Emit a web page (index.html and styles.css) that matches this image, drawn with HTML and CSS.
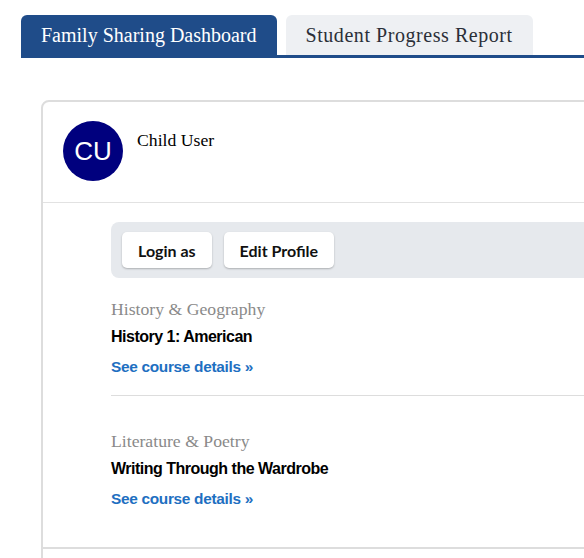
FILE: index.html
```html
<!DOCTYPE html>
<html lang="en">
<head>
<meta charset="utf-8">
<title>Family Sharing Dashboard</title>
<link rel="stylesheet" href="styles.css">
</head>
<body>
<div class="page">
  <nav class="tabs">
    <a class="tab tab-active" href="#">Family Sharing Dashboard</a>
    <a class="tab tab-wide" href="#">Student Progress Report</a>
  </nav>

  <section class="card">
    <header class="card-head">
      <div class="avatar">CU</div>
      <div class="name">Child User</div>
    </header>
    <div class="card-body">
      <div class="actions">
        <button class="btn" type="button">Login as</button>
        <button class="btn" type="button">Edit Profile</button>
      </div>
      <div class="courses">
        <div class="course">
          <div class="course-cat">History &amp; Geography</div>
          <div class="course-title">History 1: American</div>
          <a class="course-link" href="#">See course details »</a>
        </div>
        <div class="course">
          <div class="course-cat">Literature &amp; Poetry</div>
          <div class="course-title">Writing Through the Wardrobe</div>
          <a class="course-link" href="#">See course details »</a>
        </div>
      </div>
    </div>
  </section>
  <section class="card card-next"></section>
</div>
</body>
</html>
```

FILE: styles.css
```css
html, body {
  margin: 0;
  padding: 0;
  overflow: hidden;
  background: #ffffff;
}

.page {
  width: 900px;
  padding: 15px 0 0 21px;
}

.tabs {
  display: flex;
  align-items: flex-start;
  gap: 9px;
  border-bottom: 3px solid #1f4c89;
}

.tab {
  display: block;
  height: 40px;
  line-height: 40px;
  padding: 0 20px;
  font-family: "Liberation Serif", "Times New Roman", serif;
  font-size: 20px;
  color: #2b2f38;
  background: #eef0f3;
  text-decoration: none;
  border-radius: 6px 6px 0 0;
}

.tab-wide {
  letter-spacing: 0.55px;
}

.tab-active {
  color: #ffffff;
  background: #1f4c89;
  padding-bottom: 3px;
  margin-bottom: -3px;
}

.card {
  margin: 42px 0 0 20px;
  border: 2px solid #dddddd;
  border-radius: 8px 0 0 0;
  background: #ffffff;
}

.card-next {
  margin-top: 0;
  border-top: none;
  border-radius: 0;
  height: 120px;
}

.card-head {
  display: flex;
  align-items: flex-start;
  gap: 14px;
  padding: 19px 20px 21px;
  border-bottom: 1px solid #e2e2e2;
}

.avatar {
  width: 60px;
  height: 60px;
  border-radius: 50%;
  background: #00007e;
  color: #ffffff;
  font-family: "Liberation Sans", Arial, sans-serif;
  font-size: 26px;
  display: flex;
  align-items: center;
  justify-content: center;
}

.name {
  margin-top: 7px;
  font-family: "Liberation Serif", "Times New Roman", serif;
  font-size: 17.7px;
  line-height: 24px;
  color: #000000;
}

.card-body {
  padding: 19px 0 0 68px;
}

.actions {
  display: flex;
  gap: 12px;
  padding: 10px 11px;
  background: #e6e9ed;
  border-radius: 8px 0 0 8px;
}

.btn {
  height: 36px;
  padding: 0 16px;
  border: none;
  border-radius: 5px;
  background: #ffffff;
  box-shadow: 0 1px 2px rgba(0, 0, 0, 0.25);
  font-family: Lato, "Open Sans", sans-serif;
  font-weight: 700;
  font-size: 16px;
  color: #111111;
}

.courses {
  padding-bottom: 20px;
}

.course {
  padding: 19px 0 18px;
}

.course + .course {
  border-top: 1px solid #dddddd;
  padding-top: 33px;
}

.course-cat {
  font-family: "Liberation Serif", "Times New Roman", serif;
  font-size: 17.7px;
  line-height: 24px;
  color: #8a8a8a;
}

.course-title {
  margin-top: 6px;
  font-family: "Liberation Sans", Arial, sans-serif;
  font-weight: 700;
  font-size: 16px;
  letter-spacing: -0.5px;
  line-height: 20px;
  color: #000000;
}

.course-link {
  display: block;
  margin-top: 10px;
  font-family: "Liberation Sans", Arial, sans-serif;
  font-weight: 700;
  font-size: 15.4px;
  letter-spacing: -0.3px;
  line-height: 20px;
  color: #1e6fc1;
  text-decoration: none;
}
```
